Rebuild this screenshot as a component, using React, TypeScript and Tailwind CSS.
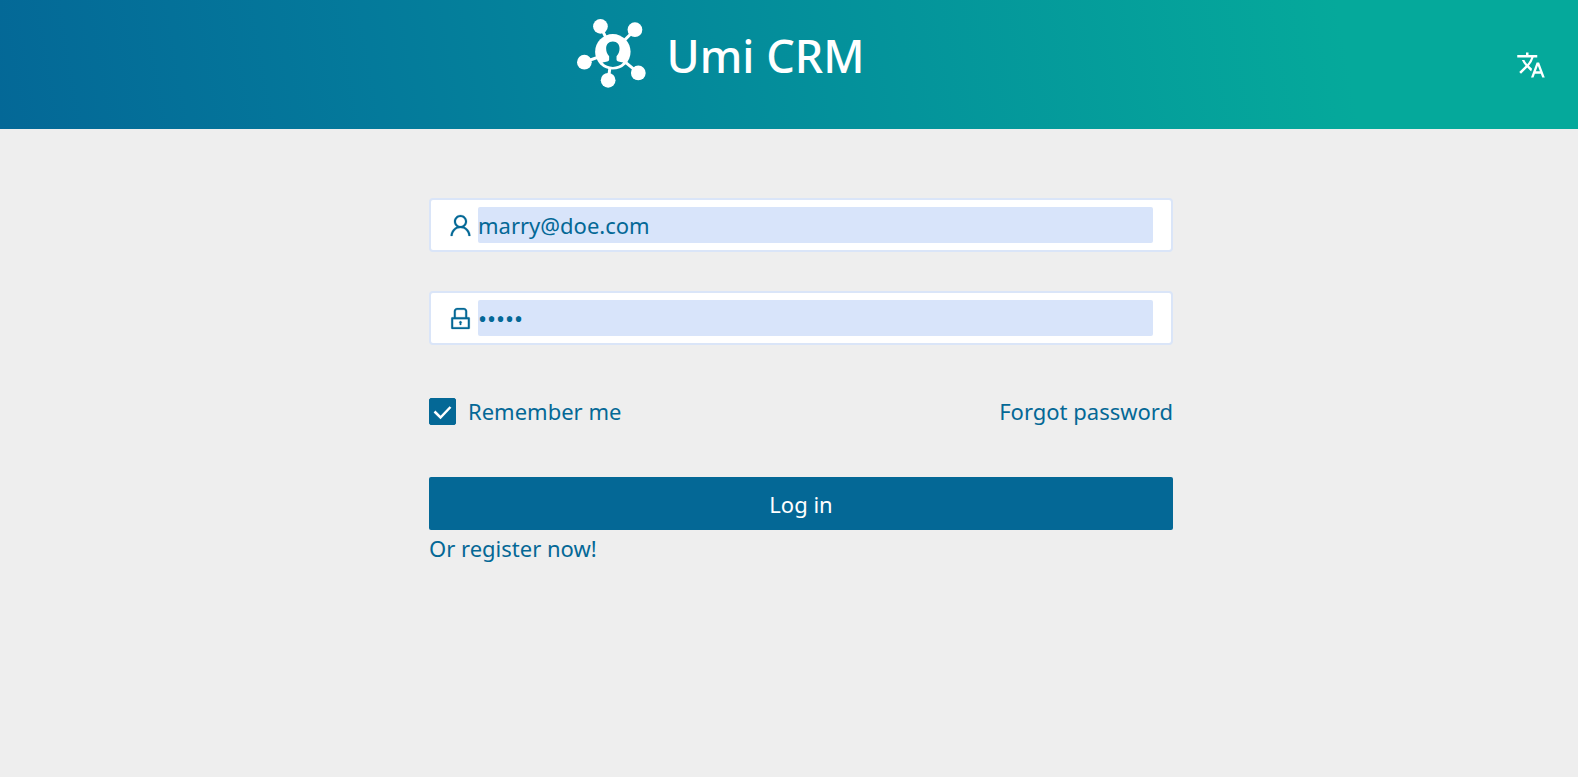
import { useState } from "react";
import { AiOutlineLock, AiOutlineUser } from "react-icons/ai";
import { MdTranslate } from "react-icons/md";

function Logo() {
  return (
    <svg viewBox="48 56 206 206" className="size-[69px] shrink-0" aria-hidden="true">
      <g stroke="#fff" strokeWidth="9">
        <path d="M155 154L118 78M155 154L221 88M155 154L69 185M155 154L231 217M148 190L141 239" />
      </g>
      <g fill="#fff">
        <circle cx="118" cy="78" r="22" />
        <circle cx="221" cy="88" r="22" />
        <circle cx="70" cy="185" r="22" />
        <circle cx="231" cy="217" r="22" />
        <circle cx="141" cy="239" r="22" />
        <circle cx="155" cy="154" r="53" />
      </g>
      <path
        fill="#04879b"
        d="M155 123c-13 0-20 9-20 21 0 10 3 17 9 23v10c0 6-9 7-20 9 8 9 19 13 31 13s23-4 31-13c-11-2-20-3-20-9v-10c6-6 9-13 9-23 0-12-7-21-20-21z"
      />
    </svg>
  );
}

export default function App() {
  const [email, setEmail] = useState("marry@doe.com");
  const [password, setPassword] = useState("marry");
  const [remember, setRemember] = useState(true);

  return (
    <div className="min-h-screen bg-[#eeeeee] font-['Noto_Sans',sans-serif] text-[22px] leading-9 text-[#046896]">
      <header className="grid h-[129px] grid-cols-[1fr_auto_1fr] bg-linear-[80deg,#046897_0%,#047a9b_24%,#04939b_56%,#05a99b_85%] text-white">
        <div className="col-start-2 flex items-start gap-5 pt-[19px] pr-34">
          <Logo />
          <h1 className="text-[45px] leading-[74px] font-medium">Umi CRM</h1>
        </div>
        <button type="button" aria-label="Change language" className="mr-8 self-center justify-self-end">
          <MdTranslate className="size-[30px]" />
        </button>
      </header>

      <main className="pt-[69px] pl-6">
        <form className="mx-auto flex w-full max-w-[744px] flex-col" onSubmit={(e) => e.preventDefault()}>
          <div className="flex h-[54px] items-center gap-1 rounded-sm border-2 border-[#dae5f8] bg-white px-[18px] pl-4">
            <label htmlFor="email">
              <AiOutlineUser className="size-[27px] stroke-[8]" aria-hidden="true" />
            </label>
            <input
              id="email"
              type="email"
              aria-label="Email"
              value={email}
              onChange={(e) => setEmail(e.target.value)}
              className="h-9 w-full min-w-0 rounded-xs bg-[#d8e4fa] outline-none"
            />
          </div>
          <div className="mt-[39px] flex h-[54px] items-center gap-1 rounded-sm border-2 border-[#dae5f8] bg-white px-[18px] pl-4">
            <label htmlFor="password">
              <AiOutlineLock className="size-[27px] stroke-[8]" aria-hidden="true" />
            </label>
            <input
              id="password"
              type="password"
              aria-label="Password"
              value={password}
              onChange={(e) => setPassword(e.target.value)}
              className="h-9 w-full min-w-0 rounded-xs bg-[#d8e4fa] text-2xl outline-none"
            />
          </div>

          <div className="mt-12 flex items-center justify-between">
            <label className="flex items-center gap-3">
              <span className="grid size-[27px]">
                <input
                  type="checkbox"
                  checked={remember}
                  onChange={(e) => setRemember(e.target.checked)}
                  className="peer col-start-1 row-start-1 appearance-none rounded-xs border border-[#046896] bg-white checked:bg-[#046896]"
                />
                <svg
                  viewBox="0 0 27 27"
                  className="pointer-events-none invisible col-start-1 row-start-1 peer-checked:visible"
                  fill="none"
                  stroke="#fff"
                  strokeWidth="2.5"
                  aria-hidden="true"
                >
                  <path d="M5.5 13.5l6 6L21.5 9" />
                </svg>
              </span>
              Remember me
            </label>
            <a href="#forgot">Forgot password</a>
          </div>

          <button type="submit" className="mt-12 h-[53px] rounded-xs bg-[#046896] text-white">
            Log in
          </button>
          <a href="#register" className="self-start">
            Or register now!
          </a>
        </form>
      </main>
    </div>
  );
}
